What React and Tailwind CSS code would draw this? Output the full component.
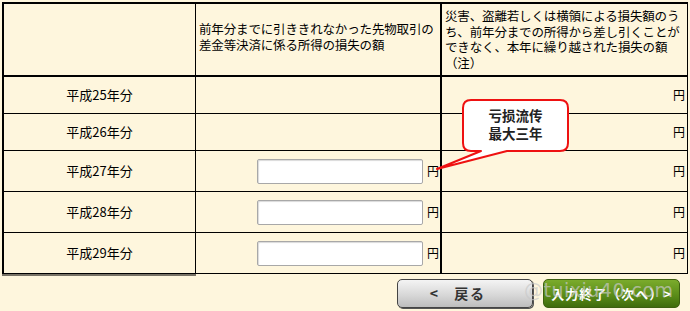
import React from 'react';

const rows = [
  { label: '平成25年分', input: false, h: 'h-[37px]' },
  { label: '平成26年分', input: false, h: 'h-[37px]' },
  { label: '平成27年分', input: true, h: 'h-[41px]' },
  { label: '平成28年分', input: true, h: 'h-[41px]' },
  { label: '平成29年分', input: true, h: 'h-[41px]' },
];

const font = { fontFamily: '"Noto Sans CJK JP", "Noto Sans CJK SC", sans-serif' };

function Row({ label, input, h }) {
  return (
    <div className={`flex ${h} border-b border-black`}>
      <div className="w-[194px] flex items-center justify-center border-r border-black border-l-2 border-l-black text-[13px] text-black">
        {label}
      </div>
      <div className="w-[246px] flex items-center justify-end pr-[1px] border-r-2 border-black">
        {input && (
          <>
            <div className="w-[166px] h-[25px] bg-white border border-[#a8a8a8] rounded-[2px] shadow-[inset_1px_1px_1px_rgba(0,0,0,0.15)]" />
            <span className="ml-[4px] text-[12px] text-black">円</span>
          </>
        )}
      </div>
      <div className="w-[246px] flex items-center justify-end pr-[2px] border-r border-black">
        <span className="text-[12px] text-black">円</span>
      </div>
    </div>
  );
}

export default function App() {
  return (
    <div className="relative w-[690px] h-[311px] bg-[#fef6dd] overflow-hidden" style={font}>
      <div className="absolute left-[2px] top-[2px] w-[686px]">
        <div className="flex h-[75px] border-t-2 border-black border-b-2 border-b-black">
          <div className="w-[194px] border-l-2 border-black border-r border-r-black" />
          <div className="w-[246px] border-r-2 border-black flex items-center pl-[3px] pb-[6px]">
            <p className="text-[12.5px] leading-[15.5px] text-black tracking-[-0.15px]">
              前年分までに引ききれなかった先物取引の<br />差金等決済に係る所得の損失の額
            </p>
          </div>
          <div className="w-[246px] border-r border-black pl-[3px] pt-[4px]">
            <p className="text-[12.5px] leading-[15.5px] text-black tracking-[-0.15px]">
              災害、盗離若しくは横領による損失額のう<br />ち、前年分までの所得から差し引くことが<br />できなく、本年に繰り越された損失の額<br />（注）
            </p>
          </div>
        </div>
        {rows.map((r) => (
          <Row key={r.label} {...r} />
        ))}
        <div className="w-[194px] h-[2px] bg-[#777266]" />
      </div>

      {/* callout */}
      <svg className="absolute left-0 top-0" width="690" height="311">
        <path
          d="M471 100 H560 Q568 100 568 108 V143 Q568 151 560 151 H507 L437 169 L481 151 H471 Q463 151 463 143 V108 Q463 100 471 100 Z"
          fill="#ffffff"
          stroke="#ee1111"
          strokeWidth="2"
          strokeLinejoin="round"
        />
      </svg>
      <div
        className="absolute left-[463px] top-[106px] w-[105px] text-center text-[13.5px] leading-[18px] font-bold text-[#222]"
        style={{ fontFamily: '"Noto Sans CJK SC", sans-serif' }}
      >
        亏损流传<br />最大三年
      </div>

      {/* buttons */}
      <div className="absolute left-[397px] top-[279px] flex gap-[10px]">
        <button className="w-[136px] h-[29px] rounded-[5px] border border-[#444] bg-[linear-gradient(#f4f4f4,#d8d8d8_55%,#bdbdbd)] shadow-[1px_1px_0_#555] flex items-center justify-center pr-[14px] text-[14px] font-bold text-[#333] tracking-[2px]">
          <span className="mr-[14px]">&lt;</span>戻る
        </button>
        <button className="w-[137px] h-[29px] rounded-[5px] border border-[#3d5f10] bg-[linear-gradient(#7bab2c,#5b8d19_55%,#3f6c0c)] flex items-center justify-center text-[13px] font-bold text-white tracking-[1px]">
          入力終了（次へ）&gt;
        </button>
      </div>
      <div
        className="absolute left-[524px] top-[276px] text-[19px] text-[#c8c8c8]/70 tracking-[0.5px]"
        style={{ fontFamily: '"DejaVu Sans", sans-serif' }}
      >
        @tuixiu40.com
      </div>
    </div>
  );
}
